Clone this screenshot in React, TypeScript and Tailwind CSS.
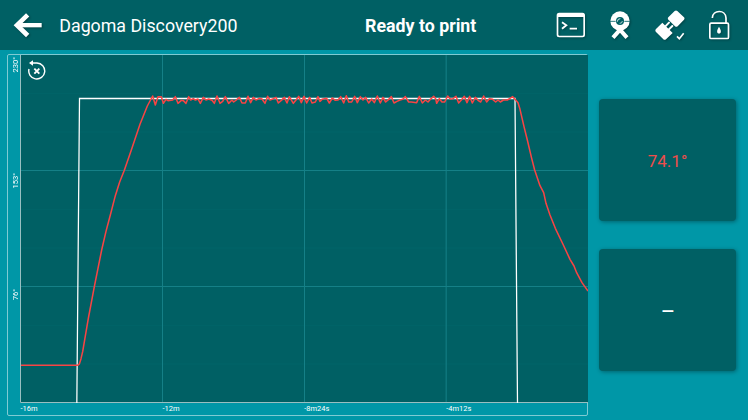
import type { ReactNode } from 'react'

type Point = [number, number]

// Chart drawing units: three per pixel
const rise: Point[] = [
  [63, 1096], [233, 1096], [238, 1092], [243, 1076], [248, 1055], [265, 955], [283, 860], [305, 750],
  [318, 694], [331, 645], [346, 587], [359, 546], [373, 511], [394, 450], [420, 373], [442, 318],
]

const plateauStart: Point[] = [
  [38, 48], [46, 75], [54, 50], [64, 50], [70, 70], [78, 58], [84, 62], [98, 60], [106, 50], [114, 70],
  [124, 61], [130, 62], [138, 70], [146, 50], [152, 60], [160, 56], [166, 60], [174, 57], [181, 70],
  [190, 52], [198, 60], [206, 57], [216, 61], [223, 70], [231, 48], [240, 70], [248, 64], [256, 50],
  [266, 70], [276, 60], [281, 66], [289, 60], [298, 52], [306, 69], [316, 69], [324, 49], [332, 68],
  [340, 52], [348, 60], [358, 55], [366, 57], [375, 70], [383, 49], [390, 60], [398, 57], [408, 52],
  [415, 69], [424, 61], [433, 52], [441, 69], [448, 50], [460, 70], [468, 60], [476, 49], [484, 68],
  [492, 49], [500, 69], [509, 52], [516, 69], [526, 66], [534, 50],
]

const plateauEnd: Point[] = [
  [0, 64], [6, 58], [20, 55], [28, 69], [37, 54], [46, 61], [54, 60], [62, 50], [71, 69], [79, 47],
  [86, 66], [95, 66], [104, 49], [112, 68], [121, 50], [129, 60], [137, 52], [146, 69], [155, 57],
  [163, 68], [172, 48], [181, 69], [189, 52], [197, 66], [206, 58], [214, 50], [222, 69], [231, 64],
  [240, 60], [248, 58], [256, 50], [266, 66], [274, 66], [290, 68], [298, 49], [307, 69], [316, 60],
  [324, 66], [332, 57], [341, 49], [347, 56], [350, 70], [358, 56], [366, 66], [374, 66], [383, 48],
  [391, 57], [399, 56], [408, 49], [416, 69], [424, 60], [433, 49], [441, 68], [449, 49], [457, 69],
  [466, 52], [474, 61], [482, 66], [491, 48], [500, 66], [508, 56], [518, 58], [527, 66], [534, 60],
  [541, 66], [550, 60], [562, 60], [578, 50],
]

const fall: Point[] = [
  [45, 28], [54, 38], [60, 58], [72, 110], [82, 150], [95, 205], [104, 240], [120, 287], [131, 308],
  [138, 340], [150, 375], [166, 415], [190, 465], [210, 508], [222, 528], [230, 548], [246, 578],
  [264, 603],
]

const shift = (points: Point[], dx: number, dy: number): Point[] =>
  points.map(([x, y]) => [x + dx, y + dy])

const temperature = [
  ...rise,
  ...shift(plateauStart, 420, 240),
  ...shift(plateauEnd, 960, 240),
  ...shift(fall, 1500, 270),
]

const yLabels = ['230°', '153°', '76°']
const xLabels = ['-16m', '-12m', '-8m24s', '-4m12s']

const BackIcon = () => (
  <svg viewBox="40 34 90 80" className="h-[27px] w-[30px] drop-shadow-[1px_1px_1px_rgba(0,0,0,0.35)]" fill="none" stroke="#fff">
    <path d="M126 73H52" strokeWidth="13" />
    <path d="M84 42L52 73L84 104" strokeWidth="14" />
  </svg>
)

const TerminalIcon = () => (
  <svg viewBox="33 28 90 90" className="size-[30px] drop-shadow-[1px_1px_1px_rgba(0,0,0,0.3)]" fill="none" stroke="#fff">
    <rect x="37.5" y="38.5" width="80" height="69" rx="5" strokeWidth="5" />
    <path d="M38 44H117" strokeWidth="10" />
    <path d="M51 65L64 74L51 84M74 84H96" strokeWidth="5.5" />
  </svg>
)

const WebcamIcon = () => (
  <svg viewBox="180 28 90 90" className="size-[30px] drop-shadow-[1px_1px_1px_rgba(0,0,0,0.3)]" fill="none">
    <circle cx="225" cy="61" r="29" fill="#fff" />
    <path d="M226 86L204 111M224 86L246 111" stroke="#fff" strokeWidth="12" />
    <path d="M195 62H212M238 62H255" stroke="#006064" strokeWidth="2.5" />
    <circle cx="225" cy="61" r="12" fill="#006064" />
    <path d="M217 63Q217 54 226 54" stroke="#fff" strokeWidth="2.5" />
    <path d="M224 68Q232 68 232 61" stroke="#fff" strokeWidth="2" />
  </svg>
)

const PlugIcon = () => (
  <svg viewBox="28 28 90 90" className="size-[30px] drop-shadow-[1px_1px_1px_rgba(0,0,0,0.3)]" fill="#fff" stroke="#fff">
    <path d="M68 50L87 31Q91 28 95 31L115 50Q118 53 115 57L96 77Q92 80 88 77L68 57Q65 53 68 50Z" stroke="none" />
    <path d="M31 85L50 66L81 97L61 116Q57 119 53 116L31 94Q27 90 31 85Z" stroke="none" />
    <path d="M59 77L70 66M69 87L80 76" strokeWidth="6" strokeLinecap="round" />
    <path d="M94 107L101 114L114 98" fill="none" strokeWidth="5" />
  </svg>
)

const LockIcon = () => (
  <svg viewBox="177 28 90 90" className="size-[30px] drop-shadow-[1px_1px_1px_rgba(0,0,0,0.3)]" fill="none" stroke="#fff">
    <rect x="194.5" y="67.5" width="56" height="46" rx="4" strokeWidth="5" />
    <path d="M202 52C203 27 242 25 243 52V67" strokeWidth="5" />
    <path d="M222 78L226 86Q229 91 227 96Q222 101 217 96Q215 91 218 86Z" fill="#fff" stroke="none" />
  </svg>
)

const ResetZoomIcon = () => (
  <svg viewBox="83 181 56 60" className="h-[20px] w-[18.67px]" fill="none" stroke="#fff">
    <path d="M86 208A24 24 0 1 0 110 190H91" strokeWidth="4.2" />
    <path d="M98 182L86 190L98 198Z" fill="#fff" stroke="none" />
    <path d="M102 207L117 222M117 207L102 222" strokeWidth="5.5" />
  </svg>
)

const Header = () => (
  <header className="flex h-[50px] shrink-0 items-center bg-[#006064] text-white">
    <div className="flex w-[365px] items-center gap-[16px] pl-[13.3px]">
      <BackIcon />
      <h1 className="pt-[2px] text-[17.8px] leading-6 whitespace-nowrap">Dagoma Discovery200</h1>
    </div>
    <p className="w-[191px] pt-[2px] text-[17.8px] leading-6 font-bold whitespace-nowrap">Ready to print</p>
    <nav className="flex items-center gap-[19.3px]">
      <TerminalIcon />
      <WebcamIcon />
      <PlugIcon />
      <LockIcon />
    </nav>
  </header>
)

const Chart = () => (
  <section className="grid h-[362px] w-[581px] grid-cols-[12px_1fr] grid-rows-[348px_1fr] rounded-[2px] border border-[#7fcbd3] text-[7.5px] leading-[10px] text-white">
    <div className="grid grid-rows-3">
      {yLabels.map((label) => (
        <span key={label} className="flex w-[13px] rotate-180 items-end justify-end self-start pb-[2px] [writing-mode:vertical-rl]">
          {label}
        </span>
      ))}
    </div>
    <div className="relative">
      <svg viewBox="60 165 1704 1044" className="block h-[348px] w-[568px]" fill="none">
        <rect x="60" y="165" width="1704" height="1044" fill="#006064" />
        <path d="M63 280H1764M63 396H1764M63 628H1764M63 744H1764M63 976H1764M63 1092H1764" stroke="#0097a7" strokeOpacity="0.08" strokeWidth="3" />
        <path d="M487.5 165V1209M913.5 165V1209M1338.5 165V1209M63 511.5H1764M63 859.5H1764" stroke="#158087" strokeWidth="3" />
        <path d="M61.5 165V1207.5H1764" stroke="#99bfc1" strokeWidth="3" />
        <polyline points="230.5,1209 238.5,295.5 1545,295.5 1552.5,1209" stroke="#fff" strokeWidth="3.8" />
        <polyline points={temperature.map((p) => p.join(',')).join(' ')} stroke="#f84444" strokeWidth="4.6" strokeLinejoin="round" />
      </svg>
      <button className="absolute top-[5px] left-[7.5px]" aria-label="Reset zoom">
        <ResetZoomIcon />
      </button>
    </div>
    <div className="col-start-2 grid grid-cols-4 pt-[1px] pl-[0.5px]">
      {xLabels.map((label) => (
        <span key={label}>{label}</span>
      ))}
    </div>
  </section>
)

const Card = ({ children }: { children: ReactNode }) => (
  <div className="flex h-[122px] items-center justify-center rounded-[4px] bg-[#006064] pt-[3px] text-[17px] shadow-[1px_1px_4px_rgba(0,0,0,0.35)]">
    {children}
  </div>
)

const App = () => (
  <div className="flex h-[420px] w-[748px] flex-col overflow-hidden bg-[#0097a7] font-[Roboto,sans-serif]">
    <Header />
    <main className="flex pt-[4px] pl-[7px]">
      <Chart />
      <aside className="ml-[11px] flex w-[137px] flex-col gap-[28px] pt-[45px]">
        <Card>
          <span className="text-[#ef4d4b]">74.1°</span>
        </Card>
        <Card>
          <span className="pl-px text-[22px] text-white">–</span>
        </Card>
      </aside>
    </main>
  </div>
)

export default App
